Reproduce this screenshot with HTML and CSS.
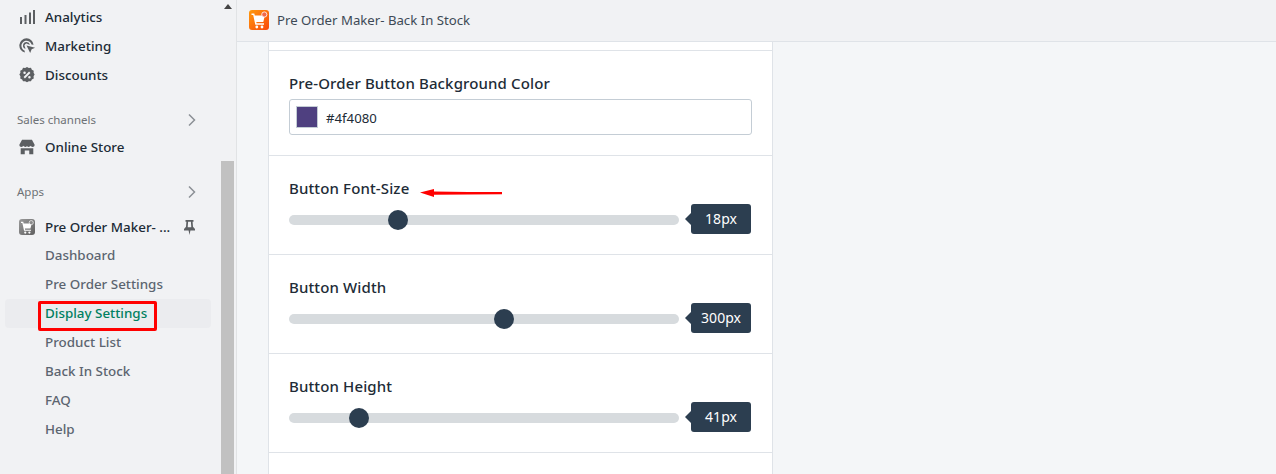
FILE: index.html
```html
<!DOCTYPE html>
<html lang="en">
<head>
    <meta charset="UTF-8">
    <title>Pre Order Maker- Back In Stock</title>
    <link rel="stylesheet" href="styles.css">
</head>
<body>
    <div class="app">
        <aside class="sidebar">
            <nav class="nav">
                <a class="nav-item">
                    <svg class="nav-icon" viewBox="0 0 18 18"><path d="M2 9h2v7H2zM6.500 7h2v9h-2zM11 4.500h2V16h-2zM15 2h2v14h-2z"/></svg>
                    Analytics
                </a>
                <a class="nav-item">
                    <svg class="nav-icon" viewBox="0 0 20 20"><path d="M9.500 1.500a8 8 0 0 0-1.800 15.800l-.5-2.300A5.700 5.700 0 1 1 15 8.200l2.300.5A8 8 0 0 0 9.500 1.500z"/><path d="M9.500 5.500a4 4 0 0 0-1.200 7.800l-.5-2.200a1.900 1.900 0 1 1 3.300-3l2.200.5a4 4 0 0 0-3.800-3.100z"/><path d="M9.500 9.500l9.500 2.500-3.800 1.700-1.700 4z"/></svg>
                    Marketing
                </a>
                <a class="nav-item">
                    <svg class="nav-icon" viewBox="0 0 20 20"><path fill-rule="evenodd" d="M10 1l2 1.200 2.400-.2 1 2.100 2.100 1.100-.2 2.400L18.500 9.500l-1.200 2 .2 2.400-2.100 1-1 2.100-2.400-.1-2 1.100-2-1.100-2.400.1-1-2.100-2.100-1 .2-2.400-1.200-2 1.200-1.900-.2-2.400 2.100-1.100 1-2.100 2.400.2zM12.300 6.200L6.200 12.300l1.500 1.500 6.100-6.100zM7.300 6a1.400 1.400 0 1 0 0 2.800 1.400 1.400 0 0 0 0-2.800zm5.400 5.200a1.400 1.400 0 1 0 0 2.800 1.400 1.400 0 0 0 0-2.800z"/></svg>
                    Discounts
                </a>

                <div class="nav-heading">
                    Sales channels
                    <svg class="chevron" viewBox="0 0 10 14"><path d="M2 1.500L7.500 7 2 12.500"/></svg>
                </div>
                <a class="nav-item nav-item-store">
                    <svg class="nav-icon" viewBox="0 0 20 20"><path d="M4.500 2h11l3 5.500c0 1.500-1 2.500-2.300 2.500-1 0-1.800-.5-2.200-1.300-.5.800-1.200 1.300-2.200 1.300-.8 0-1.400-.4-1.800-1-.4.600-1 1-1.800 1-1 0-1.700-.5-2.200-1.300C5.600 9.500 4.800 10 3.800 10 2.500 10 1.500 9 1.500 7.500z"/><path d="M3 11.500h14V18h-4.500v-4h-5v4H3z"/></svg>
                    Online Store
                </a>

                <div class="nav-heading nav-heading-apps">
                    Apps
                    <svg class="chevron" viewBox="0 0 10 14"><path d="M2 1.500L7.500 7 2 12.500"/></svg>
                </div>
                <a class="nav-item nav-item-app">
                    <span class="app-icon app-icon-grey">
                        <svg viewBox="0 0 20 20"><path d="M2.500 3.500h2.800l.5 2h10l-1.500 6.500H7.300l.3 1.300h7.400v1.500H6.300L4.200 5H2.500z"/><circle cx="7.800" cy="17" r="1.400"/><circle cx="13" cy="17" r="1.400"/><circle class="app-badge" cx="15.300" cy="4.500" r="2.600"/></svg>
                    </span>
                    <span class="nav-label">Pre Order Maker- ...</span>
                    <svg class="pin" viewBox="0 0 11 15"><path fill-rule="evenodd" d="M1.500 0h8v1.700H8.600l.4 5 2 2.300v1.500H6.400L5.500 15l-.9-4.500H0V9l2-2.300.4-5H1.500zM4.100 1.700l-.4 5.600h3.600l-.4-5.600z"/></svg>
                </a>
                <a class="nav-sub">Dashboard</a>
                <a class="nav-sub">Pre Order Settings</a>
                <a class="nav-sub nav-sub-active"><span class="nav-mark">Display Settings</span></a>
                <a class="nav-sub">Product List</a>
                <a class="nav-sub">Back In Stock</a>
                <a class="nav-sub">FAQ</a>
                <a class="nav-sub">Help</a>
            </nav>
            <div class="scrollbar">
                <span class="scroll-up"></span>
                <span class="scroll-thumb"></span>
            </div>
        </aside>

        <main class="main">
            <header class="topbar">
                <span class="app-icon app-icon-orange">
                    <svg viewBox="0 0 20 20"><path d="M2.500 3.500h2.800l.5 2h10l-1.500 6.500H7.300l.3 1.300h7.400v1.500H6.300L4.200 5H2.500z"/><circle cx="7.800" cy="17" r="1.400"/><circle cx="13" cy="17" r="1.400"/><circle class="app-badge" cx="15.300" cy="4.500" r="2.600"/></svg>
                </span>
                Pre Order Maker- Back In Stock
            </header>

            <div class="card">
                <div class="card-stub"></div>

                <section class="field field-color">
                    <div class="field-label">Pre-Order Button Background Color</div>
                    <div class="color-input">
                        <span class="swatch"></span>
                        <span class="color-value">#4f4080</span>
                    </div>
                </section>

                <section class="field">
                    <div class="field-label">
                        Button Font-Size
                        <svg class="annot-arrow" viewBox="0 0 82 9"><path d="M0 3.500L14 0v2.500l34 .5 34 0v2.300L48 5.500 14 5.700V8z"/></svg>
                    </div>
                    <div class="slider">
                        <div class="track"><span class="thumb thumb-size"></span></div>
                        <span class="bubble">18px</span>
                    </div>
                </section>

                <section class="field">
                    <div class="field-label">Button Width</div>
                    <div class="slider">
                        <div class="track"><span class="thumb thumb-width"></span></div>
                        <span class="bubble">300px</span>
                    </div>
                </section>

                <section class="field">
                    <div class="field-label">Button Height</div>
                    <div class="slider">
                        <div class="track"><span class="thumb thumb-height"></span></div>
                        <span class="bubble">41px</span>
                    </div>
                </section>

                <div class="card-rest"></div>
            </div>
        </main>
    </div>
</body>
</html>
```

FILE: styles.css
```css
*,
*::before,
*::after {
    box-sizing: border-box;
}

html,
body {
    height: 100%;
}

body {
    margin: 0;
    overflow: hidden;
    font-family: "Noto Sans", "Open Sans", sans-serif;
    font-size: 14px;
    color: #212b36;
    background: #f4f6f8;
}

.app {
    display: flex;
    height: 474px;
}

/* sidebar */
.sidebar {
    display: flex;
    flex: 0 0 237px;
    height: 100%;
    background: #f1f2f4;
    border-right: 1px solid #e1e3e5;
}

.nav {
    flex: 0 0 221px;
    padding-top: 2px;
    overflow: hidden;
}

.nav-item,
.nav-sub {
    display: flex;
    align-items: center;
    height: 29px;
    font-size: 13.4px;
    font-weight: 500;
    white-space: nowrap;
}

.nav-item {
    padding-left: 18px;
    color: #202b36;
}

.nav-item-store {
    padding-bottom: 2px;
}

.nav-item-app {
    height: 28px;
}

.nav-icon {
    flex: none;
    width: 18px;
    height: 18px;
    margin-right: 9px;
    fill: #5c5f62;
}

.nav-heading {
    display: flex;
    align-items: center;
    justify-content: space-between;
    height: 27px;
    margin-top: 17px;
    padding: 0 24px 0 17px;
    font-size: 11.5px;
    color: #6d7175;
}

.nav-heading-apps {
    margin-top: 16px;
    margin-bottom: 8px;
}

.chevron {
    width: 10px;
    height: 14px;
    fill: none;
    stroke: #8c9196;
    stroke-width: 1.500;
}

.app-icon {
    display: flex;
    flex: none;
    align-items: center;
    justify-content: center;
    width: 20px;
    height: 20px;
    border-radius: 3px;
}

.app-icon svg {
    width: 100%;
    height: 100%;
    fill: #fff;
}

.app-icon-grey {
    width: 16px;
    height: 16px;
    margin-right: 10px;
    margin-left: 1px;
    background: linear-gradient(135deg, #9a9a9a, #5f5f5f);
}

.app-icon-grey .app-badge {
    fill: #8a8a8a;
    stroke: #fff;
    stroke-width: .8;
}

.app-icon-orange {
    margin-right: 8px;
    background: linear-gradient(135deg, #ff9a0d, #f9470b);
}

.app-icon-orange .app-badge {
    fill: #f0694a;
    stroke: #fff;
    stroke-width: .8;
}

.nav-label {
    flex: 1;
}

.pin {
    flex: none;
    width: 11px;
    height: 15px;
    margin-right: 26px;
    fill: #5c5f62;
}

.nav-sub {
    position: relative;
    margin-left: 5px;
    margin-right: 10px;
    padding-left: 40px;
    padding-bottom: 2px;
    border-radius: 4px;
    color: #5c6570;
}

.nav-sub-active {
    background: #ebecef;
    color: #008060;
}

/* red box drawn over the screenshot */
.nav-mark::after {
    content: "";
    position: absolute;
    top: 2px;
    left: 33px;
    width: 119px;
    height: 30px;
    border: 3px solid #f00;
    border-radius: 2px;
}

.scrollbar {
    position: relative;
    flex: 0 0 13px;
    margin-right: 2px;
}

.scroll-up {
    position: absolute;
    top: 4px;
    left: 3px;
    width: 8px;
    height: 5px;
    border-right: 4px solid transparent;
    border-bottom: 5px solid #444;
    border-left: 4px solid transparent;
}

.scroll-thumb {
    position: absolute;
    top: 161px;
    bottom: 0;
    left: 0;
    width: 13px;
    background: #c1c1c1;
}

/* main */
.main {
    flex: 1;
    min-width: 0;
    overflow: hidden;
}

.topbar {
    display: flex;
    align-items: center;
    height: 42px;
    padding-left: 12px;
    padding-bottom: 2px;
    font-size: 13.2px;
    color: #3e4a56;
    background: #f1f2f4;
    border-bottom: 1px solid #dfe3e8;
}

.card {
    width: 505px;
    margin-left: 31px;
    background: #fff;
    border-right: 1px solid #dfe3e8;
    border-left: 1px solid #dfe3e8;
}

.card-stub {
    height: 9px;
    border-bottom: 1px solid #dfe3e8;
}

.card-rest {
    height: 30px;
}

.field {
    height: 99px;
    padding: 22px 20px 0;
    border-bottom: 1px solid #dfe3e8;
}

.field-color {
    height: 105px;
}

.field-label {
    display: flex;
    align-items: center;
    height: 22px;
    padding-bottom: 2px;
    font-size: 15px;
    font-weight: 500;
    letter-spacing: .13px;
    color: #212b36;
}

.annot-arrow {
    width: 82px;
    height: 9px;
    margin-top: 11px;
    margin-left: 11px;
    fill: #f00;
}

.color-input {
    display: flex;
    align-items: center;
    height: 36px;
    margin-top: 4px;
    padding-left: 6px;
    border: 1px solid #c4cdd5;
    border-radius: 3px;
    font-size: 13.2px;
    color: #212b36;
}

.color-value {
    padding-top: 2px;
}

.swatch {
    width: 22px;
    height: 22px;
    margin-right: 8px;
    background: #4f4080;
    border: 1px solid #c4cdd5;
}

.slider {
    display: flex;
    align-items: center;
    height: 30px;
    margin-top: 5px;
}

.track {
    position: relative;
    flex: none;
    width: 390px;
    height: 10px;
    background: #d7dbde;
    border-radius: 5px;
}

.thumb {
    position: absolute;
    top: -5px;
    width: 20px;
    height: 20px;
    margin-left: -10px;
    background: #2c3e50;
    border-radius: 50%;
}

.thumb-size {
    left: 109px;
}

.thumb-width {
    left: 215px;
}

.thumb-height {
    left: 70px;
}

.bubble {
    position: relative;
    flex: none;
    width: 60px;
    height: 30px;
    margin-top: -2px;
    margin-left: 12px;
    line-height: 30px;
    text-align: center;
    font-size: 14px;
    color: #fff;
    background: #2c3e50;
    border-radius: 3px;
}

.bubble::before {
    content: "";
    position: absolute;
    top: 9px;
    left: -6px;
    width: 6px;
    height: 12px;
    border-top: 6px solid transparent;
    border-right: 6px solid #2c3e50;
    border-bottom: 6px solid transparent;
}
```
